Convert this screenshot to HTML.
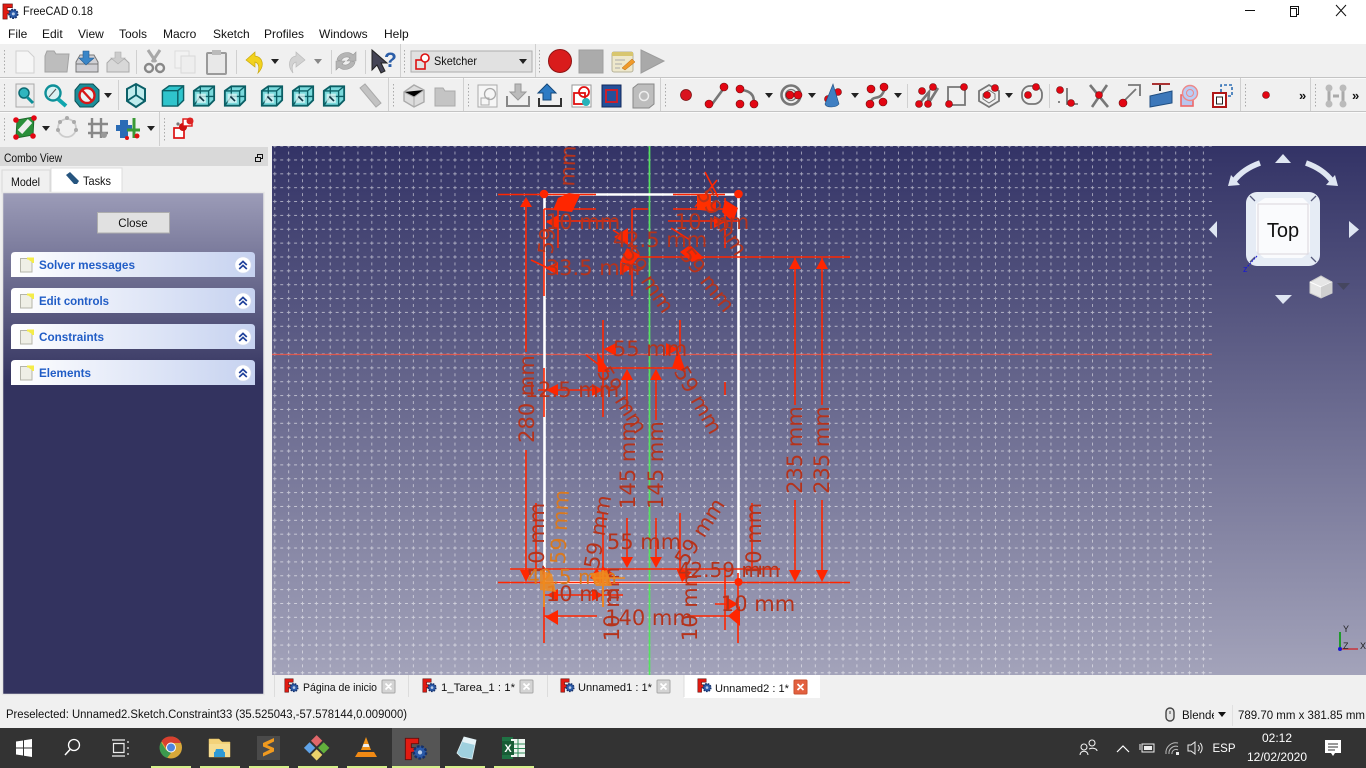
<!DOCTYPE html>
<html>
<head>
<meta charset="utf-8">
<title>FreeCAD 0.18</title>
<style>
html,body{margin:0;padding:0;width:1366px;height:768px;overflow:hidden;background:#f0f0f0}
svg{display:block;position:absolute;left:0;top:0}
text{font-family:"Liberation Sans",sans-serif;font-size:12px;fill:#111}
.m{font-size:12px}
.d{font-family:"DejaVu Sans",sans-serif;font-size:21px;fill:#b5331c;text-anchor:middle;dominant-baseline:central}
.o{fill:#d9791f}
.t{fill:#fff;font-size:12px;text-anchor:middle}
.b{font-weight:bold;fill:#215dc6;font-size:11.5px}
</style>
</head>
<body>
<svg width="1366" height="768" viewBox="0 0 1366 768" xmlns="http://www.w3.org/2000/svg">
<defs>
<linearGradient id="vg" x1="0" y1="0" x2="0" y2="1"><stop offset="0" stop-color="#333366"/><stop offset="1" stop-color="#a3a3ba"/></linearGradient>
<linearGradient id="pg" x1="0" y1="0" x2="0" y2="1"><stop offset="0" stop-color="#9c9cb8"/><stop offset=".38" stop-color="#33335f"/><stop offset="1" stop-color="#33335f"/></linearGradient>
<linearGradient id="bg" x1="0" y1="0" x2="1" y2="0"><stop offset="0" stop-color="#fff"/><stop offset="1" stop-color="#c6d2f0"/></linearGradient>
<pattern id="grid" width="13.86" height="13.86" patternUnits="userSpaceOnUse" patternTransform="translate(642.07 347.07)">
<path d="M5.2 6.93H8.7M12.4 6.93H13.86M0 6.93H1.5M6.93 5.2V8.7M6.93 12.4V13.86M6.93 0V1.5" stroke="#fff" stroke-opacity=".55" stroke-width=".9" fill="none"/>
</pattern>
<symbol id="fc" viewBox="0 0 18 18" overflow="visible"><path d="M1 1H11V5H5.5V8H10V11.5H5.5V17H1Z" fill="#e21b12" stroke="#5b1010" stroke-width=".7"/><circle cx="12" cy="11.5" r="4.6" fill="#2b5aa8" stroke="#16316a" stroke-width="1.8" stroke-dasharray="2 1.2"/><circle cx="12" cy="11.5" r="1.6" fill="#b7cbe8"/></symbol>
<symbol id="cube" viewBox="0 0 26 26" overflow="visible"><path d="M2 8 9 3H24V18L18 24H2Z" fill="#2fc4cc" stroke="#0b5f65" stroke-width="1.5"/><path d="M2 8H18V24M18 8 24 3" fill="none" stroke="#0b5f65" stroke-width="1.5"/></symbol>
<symbol id="cubew" viewBox="0 0 26 26" overflow="visible"><path d="M2 8 9 3H24V18L18 24H2Z" fill="#7ad9dc" stroke="#0b5f65" stroke-width="2"/><path d="M2 8H18V24M18 8 24 3M9 3V14M9 14H24M9 14 2 24" fill="none" stroke="#0b5f65" stroke-width="1.5"/><rect x="5" y="11" width="10" height="10" fill="#e8f8f8" opacity=".7"/><path d="M8 14 13 19" stroke="#134" stroke-width="1.800"/></symbol>
<symbol id="note" viewBox="0 0 14 16"><rect x=".5" y="1.5" width="11.5" height="13.5" fill="#efefe6" stroke="#b5b5aa"/><path d="M7 1.5H13V6" fill="#f4ec4a" stroke="#f4ec4a" stroke-width="2"/></symbol>
<symbol id="chev" viewBox="0 0 18 18"><circle cx="9" cy="9" r="8.3" fill="#fff" stroke="#cdd6ee"/><path d="M5.2 9 9 5.4 12.8 9M5.2 13 9 9.4 12.8 13" fill="none" stroke="#1d3f9a" stroke-width="1.7"/></symbol>
<symbol id="drop" viewBox="0 0 8 5"><path d="M0 0H8L4 5Z" fill="#222"/></symbol>
</defs>

<!-- title + menu -->
<rect width="1366" height="44" fill="#fff"/>
<use href="#fc" x="2" y="3" width="17" height="17"/>
<text x="23" y="15" textLength="70" lengthAdjust="spacingAndGlyphs">FreeCAD 0.18</text>
<path d="M1245 10.5H1255" stroke="#111"/>
<path d="M1290.5 8.5V6.5H1298.5V14.5H1296.5M1290.5 8.5H1296.5V16.500H1290.5V8.5Z" fill="none" stroke="#111"/>
<path d="M1336 5 1346 16M1346 5 1336 16" stroke="#111" stroke-width="1"/>
<text class="m" x="8" y="38">File</text><text class="m" x="42" y="38">Edit</text><text class="m" x="78" y="38">View</text><text class="m" x="119" y="38">Tools</text><text class="m" x="163" y="38">Macro</text><text class="m" x="213" y="38">Sketch</text><text class="m" x="264" y="38">Profiles</text><text class="m" x="319" y="38">Windows</text><text class="m" x="384" y="38">Help</text>

<!-- toolbars -->
<rect y="44" width="1366" height="102" fill="#f0f0f0"/>
<path d="M0 77.5H1366M0 111.5H1366" stroke="#c4c4c4"/>
<path d="M0 78.5H1366M0 112.5H1366" stroke="#fafafa"/>
<g stroke="#d0d0d0">
<path d="M136.5 50V74M236.5 50V74M331.5 50V74M365.5 50V74M400.5 44V77M535.5 44V77M118.5 80V110M388.5 78V111M463.5 78V111M660.5 78V111M907.5 84V108M1049.5 84V108M1240.5 78V111M1310.5 78V111M159.5 112V146"/>
</g>
<g stroke="#aaa" stroke-dasharray="1.5 2" fill="none">
<path d="M4.5 50V74M404.5 50V74M539.5 50V74M4.5 84V108M393.5 84V108M468.5 84V108M665.5 84V108M1245.5 84V108M1315.5 84V108M4.5 118V142M164.5 118V142"/>
</g>

<!-- row 1 -->
<path d="M16 51H28L34 57V73H16Z" fill="#f6f6f6" stroke="#d0d0d0"/>
<path d="M45 56V72H67L69 54H56L54 51H47Z" fill="#bdbdbd" stroke="#a2a2a2"/>
<path d="M76 72V62L80 55H94L98 62V72Z" fill="#d0d0d4" stroke="#777"/><path d="M76 64H98" stroke="#777"/><path d="M83 51H89V58H94L86 65 79 58H83Z" fill="#3a86c8" stroke="#235a8f" stroke-width=".6"/>
<path d="M107 72V63L111 59H125L129 63V72Z" fill="#d8d8d8" stroke="#aaa"/><path d="M115 52H121V58H125L118 64 111 58H115Z" fill="#ccc" stroke="#aaa" stroke-width=".6"/>
<path d="M148 50 156 62M160 50 152 62" stroke="#a8a8a8" stroke-width="3"/><circle cx="149" cy="68" r="4" fill="none" stroke="#888" stroke-width="2.4"/><circle cx="160" cy="68" r="4" fill="none" stroke="#888" stroke-width="2.4"/>
<rect x="175" y="51" width="14" height="17" fill="#f2f2f2" stroke="#ddd"/><rect x="181" y="56" width="14" height="17" fill="#eee" stroke="#d8d8d8"/>
<rect x="207" y="53" width="19" height="21" rx="1" fill="#e8e8e8" stroke="#9a9a9a" stroke-width="2"/><rect x="212" y="50" width="9" height="5" fill="#bbb"/>
<path d="M246 60 255 52V56C263 57 265 66 258 73 260 66 258 63 255 62V67Z" fill="#f2d21e" stroke="#c9a90f" stroke-width=".7"/>
<use href="#drop" x="271" y="59" width="8" height="5"/>
<path d="M305 60 296 52V56C289 57 287 66 293 73 291 66 293 63 296 62V67Z" fill="#d2d2d2" stroke="#bbb" stroke-width=".7"/>
<path d="M314 59H322L318 64Z" fill="#888"/>
<path d="M337 60C338 53 349 50 353 55L356 52V61H347L350 58C347 56 343 57 341 61ZM355 62C354 69 343 72 339 67L336 70V61H345L342 64C345 66 349 65 351 61Z" fill="#b5b5b5" stroke="#999" stroke-width=".6"/>
<path d="M372 50V70L377 65 381 73 385 71 381 63H387Z" fill="#445" stroke="#222"/>
<text x="384" y="67" style="font-size:21px;font-weight:bold;fill:#2b5ea8">?</text>
<rect x="411" y="51" width="121" height="21" fill="#e1e1e1" stroke="#adadad"/>
<rect x="416" y="60" width="9" height="9" fill="none" stroke="#d11" stroke-width="1.6"/><circle cx="425" cy="58" r="4" fill="#fff" stroke="#d11" stroke-width="1.6"/>
<text x="434" y="65" textLength="43" lengthAdjust="spacingAndGlyphs">Sketcher</text>
<use href="#drop" x="519" y="59" width="8" height="5"/>
<circle cx="560" cy="61" r="11.5" fill="#d91c1c" stroke="#8f1414"/>
<rect x="579" y="50" width="24" height="23" fill="#ababab" stroke="#9f9f9f"/>
<rect x="612" y="52" width="21" height="20" rx="2" fill="#eee8cc" stroke="#b6b29a"/><rect x="612" y="52" width="21" height="4" fill="#d8c66f"/><path d="M615 60H625M615 64H622M615 68H620" stroke="#aaa"/><path d="M622 68 632 59 635 62 625 70Z" fill="#f09a2a" stroke="#b26a12" stroke-width=".5"/>
<path d="M641 50 664 61 641 73Z" fill="#a9a9a9" stroke="#9d9d9d"/>

<!-- row 2 -->
<rect x="16" y="84" width="18" height="23" fill="#ececec" stroke="#aaa"/><circle cx="24" cy="93" r="5" fill="#2fb5bf" stroke="#0c6a72" stroke-width="1.5"/><path d="M27 97 33 103" stroke="#0c8f98" stroke-width="3"/>
<circle cx="53" cy="93" r="7.5" fill="#d9f2f3" stroke="#0d8f98" stroke-width="2.4"/><path d="M58 99 66 106" stroke="#10a6ae" stroke-width="4"/><path d="M49 97 56 89" stroke="#555"/>
<path d="M80 84H93L99 90V101L93 107H80L75 101V90Z" fill="#1c8e99" stroke="#0a4f55"/><circle cx="87" cy="95.500" r="7.500" fill="#e8f3f3" stroke="#d61717" stroke-width="2.4"/><path d="M82 90 92 101" stroke="#d61717" stroke-width="2.4"/>
<use href="#drop" x="104" y="93" width="8" height="5"/>
<path d="M127 89 136 84 145 89V101L136 107 127 101Z" fill="#bfeced" stroke="#0b6068" stroke-width="2"/><path d="M136 95 136 84M136 95 127 101M136 95 145 101" stroke="#0b6068" stroke-width="1.8"/>
<use href="#cube" x="160" y="83" width="26" height="25"/>
<use href="#cubew" x="192" y="83" width="24" height="25"/>
<use href="#cubew" x="223" y="83" width="24" height="25"/>
<use href="#cubew" x="260" y="83" width="24" height="25"/>
<use href="#cubew" x="291" y="83" width="24" height="25"/>
<use href="#cubew" x="322" y="83" width="24" height="25"/>
<path d="M360 88 365 84 381 103 376 107Z" fill="#c2c2c2" stroke="#aaa"/>
<path d="M404 92 414 85 424 90 424 102 414 107 404 101Z" fill="#dcdcdc" stroke="#aaa" stroke-width="1.400"/><path d="M404 92 414 97 424 90M414 97V107" stroke="#aaa"/>
<path d="M435 88H443L445 91H455V106H435Z" fill="#c4c4c4" stroke="#aaa"/>
<rect x="478" y="85" width="19" height="22" fill="#f6f6f6" stroke="#aaa"/><circle cx="490" cy="94" r="5.500" fill="none" stroke="#aaa" stroke-width="1.300"/><path d="M481 98H489V105H481Z" fill="none" stroke="#aaa"/>
<path d="M515 84H521V92H526L518 100 510 92H515Z" fill="#bbb" stroke="#999"/><path d="M507 96V106H529V96" fill="none" stroke="#888" stroke-width="2"/>
<path d="M547 84 556 93H551V100H543V93H538Z" fill="#2d7bc4" stroke="#14477a"/><path d="M539 98V106H561V98" fill="none" stroke="#333" stroke-width="2"/>
<rect x="572" y="85" width="19" height="22" fill="#fff" stroke="#999"/><rect x="574" y="93" width="11" height="11" fill="none" stroke="#e01010" stroke-width="1.800"/><circle cx="584" cy="92" r="5" fill="none" stroke="#e01010" stroke-width="1.800"/><circle cx="586" cy="102" r="4" fill="#26b2ba"/>
<rect x="602" y="85" width="19" height="22" fill="#24509a" stroke="#12295a"/><rect x="606" y="90" width="11" height="12" fill="none" stroke="#c81f2e" stroke-width="2"/>
<path d="M633 88 638 84H654V104L649 108H633Z" fill="#bdbdbd" stroke="#888"/><circle cx="644" cy="96" r="4.500" fill="none" stroke="#eee" stroke-width="1.500"/>

<g stroke="#777" fill="none" stroke-width="2.600">
<path d="M710 107 724 88"/><path d="M741 90C755 91 754 100 754 105"/>
<circle cx="791" cy="95" r="9.500"/><circle cx="791" cy="95" r="5.500" stroke-width="1.300"/>
<path d="M870 104C873 92 880 104 885 88"/>
<path d="M919 104 929 92 928 104 938 88"/>
<path d="M948 87H965V105H948Z" stroke-width="1.800"/>
<path d="M989 85 999 91V101L989 107 979 101V91Z" stroke-width="1.800"/><path d="M989 90 995 94V99L989 103 983 99V94Z" stroke-width="1"/>
<rect x="1022" y="86" width="20" height="18" rx="8" stroke-width="1.800"/>
<path d="M1067 88V104H1078M1058 102H1060" stroke-width="1.800"/>
<path d="M1090 85 1108 107M1107 85 1092 107"/>
<path d="M1121 104 1136 89M1128 85H1140V96" stroke-width="1.800"/>
</g>
<circle cx="686" cy="95" r="5.500" fill="#d9141e" stroke="#701010" stroke-width=".7"/>
<g fill="#e30613" stroke="#6a1010" stroke-width=".6">
<circle cx="709" cy="104" r="4"/><circle cx="724" cy="87" r="4"/>
<circle cx="740" cy="89" r="4"/><circle cx="740" cy="104" r="4"/><circle cx="754" cy="104" r="4"/>
<circle cx="790" cy="95" r="4"/><circle cx="798" cy="95" r="4"/>
<circle cx="828" cy="99" r="3.500"/><circle cx="838" cy="92" r="3.500"/>
<circle cx="871" cy="89" r="4"/><circle cx="884" cy="87" r="4"/><circle cx="870" cy="104" r="4"/><circle cx="883" cy="102" r="4"/>
<circle cx="919" cy="104" r="3.500"/><circle cx="928" cy="104" r="3.500"/><circle cx="922" cy="91" r="3.500"/><circle cx="933" cy="87" r="3.500"/>
<circle cx="949" cy="104" r="3.500"/><circle cx="964" cy="87" r="3.500"/>
<circle cx="995" cy="88" r="3.500"/><circle cx="987" cy="95" r="3.500"/>
<circle cx="1036" cy="87" r="3.500"/><circle cx="1028" cy="95" r="3.500"/>
<circle cx="1060" cy="90" r="3.500"/><circle cx="1071" cy="103" r="3.500"/>
<circle cx="1099" cy="95" r="3.500"/><circle cx="1123" cy="103" r="4"/>
<circle cx="1266" cy="95" r="3.500"/>
</g>
<path d="M833 84 839 104 C836 108 826 108 825 104Z" fill="#3f7fc2" stroke="#24507e" stroke-width=".6"/>
<use href="#drop" x="765" y="93" width="8" height="5"/><use href="#drop" x="808" y="93" width="8" height="5"/><use href="#drop" x="851" y="93" width="8" height="5"/><use href="#drop" x="894" y="93" width="8" height="5"/><use href="#drop" x="1005" y="93" width="8" height="5"/>
<path d="M1150 96 1172 91V103L1150 107Z" fill="#3d78ba" stroke="#1f4d80"/><path d="M1160 85V91" stroke="#333" stroke-width="2"/><path d="M1152 84H1170" stroke="#a33" stroke-width="2"/>
<rect x="1181" y="95" width="12" height="11" fill="#b9c5ee" stroke="#e66" stroke-width="1.600"/><circle cx="1190" cy="93" r="7.500" fill="#b9cdf5" stroke="#e88" stroke-width="1.400"/><circle cx="1190" cy="93" r="3.500" fill="none" stroke="#e88"/>
<rect x="1213" y="93" width="13" height="14" fill="#fff" stroke="#b01818" stroke-width="2"/><rect x="1216.500" y="97" width="6" height="7" fill="#fff" stroke="#222"/><path d="M1221 92V85H1232V96H1228" fill="none" stroke="#2e6fb5" stroke-width="1.600" stroke-dasharray="3 2"/>
<text x="1299" y="100" style="font-size:13px;font-weight:bold;fill:#111">»</text>
<text x="1352" y="100" style="font-size:13px;font-weight:bold;fill:#111">»</text>
<path d="M1329 88V104M1343 88V104M1333 96H1339" stroke="#aaa" stroke-width="3"/><circle cx="1329" cy="88" r="3.500" fill="#bbb"/><circle cx="1343" cy="88" r="3.500" fill="#bbb"/><circle cx="1329" cy="104" r="3.500" fill="#bbb"/><circle cx="1343" cy="104" r="3.500" fill="#bbb"/>

<!-- row 3 -->
<path d="M17 120 34 117 33 135 16 138Z" fill="#2a8f3a" stroke="#1b6a2a"/><path d="M20 132 30 121" stroke="#eee" stroke-width="6"/>
<g fill="#e30613"><circle cx="16" cy="120" r="2.800"/><circle cx="34" cy="118" r="2.800"/><circle cx="16" cy="137" r="2.800"/><circle cx="33" cy="136" r="2.800"/></g>
<use href="#drop" x="42" y="126" width="8" height="5"/>
<circle cx="67" cy="128" r="9" fill="none" stroke="#ccc" stroke-width="1.800"/><g fill="#aaa"><circle cx="60" cy="122" r="2"/><circle cx="74" cy="122" r="2"/><circle cx="58" cy="130" r="2"/><circle cx="76" cy="130" r="2"/><circle cx="67" cy="118" r="2"/></g>
<path d="M92 118V138M101 118V138M88 124H108M88 133H108" stroke="#888" stroke-width="2.400"/><circle cx="104" cy="135" r="3" fill="#999"/>
<path d="M120 120H128V138H120ZM116 125H132V131H116Z" fill="#2a6bb5"/><path d="M127 130H140M134 118V138" stroke="#3a9a35" stroke-width="3"/><circle cx="137" cy="136" r="2.500" fill="#d11"/><circle cx="127" cy="138" r="2" fill="#d11"/>
<use href="#drop" x="147" y="126" width="8" height="5"/>
<rect x="174" y="128" width="10" height="10" fill="#fff" stroke="#d11" stroke-width="1.700"/><circle cx="183" cy="127" r="4" fill="#c11"/><rect x="183" y="119" width="9" height="7" fill="#fff" stroke="#d11" stroke-width="1.400"/><circle cx="190" cy="121" r="3.500" fill="#d22"/><circle cx="178" cy="124" r="1.600" fill="#777"/>

<!-- combo view -->
<rect y="146" width="272" height="552" fill="#f0f0f0"/>
<rect x="0" y="147" width="268" height="19" fill="#d9d9d9"/>
<text x="4" y="162" textLength="58" lengthAdjust="spacingAndGlyphs" style="font-size:11.500px">Combo View</text>
<path d="M255.500 157.500H260.500V161.500H255.500ZM257.500 157.500V154.500H262.500V158.500H260.500" fill="none" stroke="#111" stroke-width="1"/>
<rect x="2" y="170" width="48" height="23" fill="#f0f0f0" stroke="#d9d9d9"/>
<text x="11" y="186" textLength="29" lengthAdjust="spacingAndGlyphs">Model</text>
<rect x="51" y="168" width="71" height="25" fill="#fff" stroke="#dcdcdc"/>
<path d="M66 175 70 172 79 181 77 184 74 184Z" fill="#26557f"/>
<text x="83" y="185" textLength="28" lengthAdjust="spacingAndGlyphs">Tasks</text>
<rect x="2.500" y="192.500" width="261.500" height="502" fill="url(#pg)" stroke="#e6e6e6" stroke-width="1.500"/>
<rect x="97.500" y="212.500" width="72" height="20.500" fill="#e1e1e1" stroke="#adadad"/>
<text x="133" y="227" style="text-anchor:middle;font-size:11.500px">Close</text>
<g>
<path d="M11 277V256Q11 252 15 252H251Q255 252 255 256V277Z" fill="url(#bg)"/>
<path d="M11 313V292Q11 288 15 288H251Q255 288 255 292V313Z" fill="url(#bg)"/>
<path d="M11 349V328Q11 324 15 324H251Q255 324 255 328V349Z" fill="url(#bg)"/>
<path d="M11 385V364Q11 360 15 360H251Q255 360 255 364V385Z" fill="url(#bg)"/>
<use href="#note" x="20" y="257" width="14" height="16"/><use href="#note" x="20" y="293" width="14" height="16"/><use href="#note" x="20" y="329" width="14" height="16"/><use href="#note" x="20" y="365" width="14" height="16"/>
<text class="b" x="39" y="269" textLength="96" lengthAdjust="spacingAndGlyphs">Solver messages</text><text class="b" x="39" y="305" textLength="70" lengthAdjust="spacingAndGlyphs">Edit controls</text><text class="b" x="39" y="341" textLength="65" lengthAdjust="spacingAndGlyphs">Constraints</text><text class="b" x="39" y="377" textLength="52" lengthAdjust="spacingAndGlyphs">Elements</text>
<use href="#chev" x="234" y="256" width="18" height="18"/><use href="#chev" x="234" y="292" width="18" height="18"/><use href="#chev" x="234" y="328" width="18" height="18"/><use href="#chev" x="234" y="364" width="18" height="18"/>
</g>

<!-- 3D view -->
<rect x="272" y="146" width="1094" height="529" fill="url(#vg)"/>
<rect x="272" y="146" width="940" height="529" fill="url(#grid)"/>
<path d="M272 354.500H1212" stroke="#e8574a" stroke-width="1.300" opacity=".9"/>
<path d="M649.500 146V675" stroke="#55e060" stroke-width="1.700"/>
<g stroke="#fff" stroke-width="2.600" fill="none"><path d="M544.500 194.500H738.500V582.500H544.500Z"/></g>
<path d="M558 582.500H600" stroke="#fff" stroke-width="3"/>
<!-- red construction lines -->
<g stroke="#ff2600" stroke-width="1.600" fill="none">
<path d="M498 194.500H596M673 194.500H725M498 582.500H850M510 569H780M637 257H850M603 368H677"/>
<path d="M526 200V352M526 450V572M795 258V405M822 258V405M795 500V580M822 500V580"/>
<path d="M544 209V296M544 368V417M544 567V643M738 573V643M558 200V248M725 198V248M725 567V630M725 382V395"/>
<path d="M603 320V417M680 320V352M603 513V607M680 513V573M536 503V570M752 503V570M627 370V410M656 370V420M627 518V560M656 518V560M632 209V296"/>
<path d="M544 209H596M632 209H648M673 209H725M547 221H618M668 221H740M545 595H623M544 616H597M687 616H737M715 604H737"/>
<path d="M705 172 718 197M717 180 695 207M531 260 548 268M613 230 628 240M671 228 690 240M586 355 603 368M538 390 600 390M680 355 677 368"/>
</g>
<!-- arrowheads -->
<g fill="#ff2600">
<path d="M526 197 520 207H532ZM526 582 520 570H532ZM795 258 789 269H801ZM822 258 816 269H828ZM795 582 789 570H801ZM822 582 816 570H828ZM627 369 621 380H633ZM656 369 650 380H662ZM627 568 621 557H633ZM656 568 650 557H662Z"/>
<path d="M546 222 558 215V229ZM728 616 740 606V626 Z M545 617 558 610V625ZM738 604 726 597V611ZM545 268 558 262V275ZM632 268 620 262V275ZM604 349 616 343V356ZM678 349 666 343V356ZM603 390 592 384V396ZM546 390 558 384V396ZM547 595 558 589V601ZM603 595 592 589V601ZM725 222 714 216V228Z"/>
<path d="M569 193 580 195 572 212 553 210 558 198ZM614 237 628 228 628 245ZM627 248 640 255 632 265 620 262ZM690 245 704 258 692 262 680 252ZM725 200 738 208 733 222 722 212ZM700 210 716 200 716 212ZM597 352 610 372 598 372ZM678 350 686 372 672 368ZM602 566 614 574 600 582ZM676 568 692 572 682 582ZM597 568 605 585 590 578Z"/>
<rect x="697" y="195" width="14" height="15" fill="#ff3000"/>
<circle cx="544" cy="194" r="4.300"/><circle cx="738.500" cy="194" r="4.300"/><circle cx="738.500" cy="582" r="4"/>
</g>
<!-- dimension labels -->
<text class="d" transform="translate(527 399) rotate(-90)">280 mm</text>
<text class="d" transform="translate(795 450) rotate(-90)">235 mm</text>
<text class="d" transform="translate(822 450) rotate(-90)">235 mm</text>
<text class="d" transform="translate(628 465) rotate(-90)">145 mm</text>
<text class="d" transform="translate(656 465) rotate(-90)">145 mm</text>
<text class="d" x="649" y="618">140 mm</text>
<text class="d" x="758" y="604">10 mm</text>
<text class="d" x="583" y="594">10 mm</text>
<text class="d" transform="translate(612 604) rotate(-90)">10 mm</text>
<text class="d" transform="translate(690 604) rotate(-90)">10 mm</text>
<text class="d" transform="translate(537 540) rotate(-90)">10 mm</text>
<text class="d" transform="translate(754 540) rotate(-90)">10 mm</text>
<text class="d" x="650" y="349">55 mm</text>
<text class="d" x="644" y="542">55 mm</text>
<text class="d" x="572" y="390">12.5 mm</text>
<text class="d" x="593" y="268">33.5 mm</text>
<text class="d" x="660" y="240">42.5 mm</text>
<text class="d" x="583" y="222">10 mm</text>
<text class="d" x="712" y="222">10 mm</text>
<text class="d" x="729" y="570" style="font-size:20px">42.59 mm</text>
<text class="d" transform="translate(568 166) rotate(-88)">mm</text>
<text class="d" transform="translate(547 241) rotate(-85)">59</text>
<text class="d" transform="translate(722 222) rotate(58)">59 mm</text>
<text class="d" transform="translate(648 280) rotate(56)">59 mm</text>
<text class="d" transform="translate(707 280) rotate(52)">59 mm</text>
<text class="d" transform="translate(698 400) rotate(60)">59 mm</text>
<text class="d" transform="translate(622 400) rotate(58)">59 mm</text>
<text class="d" transform="translate(598 532) rotate(-80)">59 mm</text>
<text class="d" transform="translate(700 532) rotate(-58)">59 mm</text>
<text class="d o" transform="translate(560 527) rotate(-87)">59 mm</text>
<text class="d o" x="572" y="577" style="font-size:20px">42.5 mm</text>
<path d="M544 580V607M603 570V607" stroke="#ef8a1f" stroke-width="1.800"/>
<path d="M540 570 552 574 556 592 540 590ZM590 574 607 570 612 586 596 586Z" fill="#ef8a1f" opacity=".85"/>
<path d="M593 578H625" stroke="#ef8a1f" stroke-width="1.600"/>

<!-- nav cube -->
<g fill="#dfe6f2">
<path d="M1283 154 1291 163H1275Z"/><path d="M1217 221V238L1209 229.500Z"/><path d="M1349 221V238L1359 229.500Z"/><path d="M1275 295H1292L1283 304Z"/>
<path d="M1228 186 1240 185 1231 175Z"/><path d="M1338 186 1326 185 1335 175Z"/>
</g>
<path d="M1260 163Q1243 169 1234 181M1306 163Q1323 169 1332 181" fill="none" stroke="#dfe6f2" stroke-width="5.500"/>
<rect x="1246" y="192" width="74" height="74" rx="11" fill="#e6ecf5"/>
<path d="M1256 204 1265 198H1303L1310 205V252L1302 258H1264L1256 251Z" fill="#fafbfd"/>
<rect x="1258" y="204" width="50" height="50" fill="none" stroke="#d9d4dc" stroke-width="1"/>
<path d="M1250 196 1255 201M1316 196 1311 201M1250 262 1255 257M1316 262 1311 257" stroke="#55597a" stroke-width="1.300"/>
<text x="1283" y="237" style="font-size:20px;text-anchor:middle;fill:#111">Top</text>
<path d="M1257 256 1247 267" stroke="#1717d8" stroke-dasharray="2 1"/>
<text x="1243" y="272" style="font-size:9px;fill:#1717d8">z</text>
<path d="M1310 282 1321 276 1332 282V293L1321 298 1310 293Z" fill="#e6e6e6" stroke="#ccc"/><path d="M1310 282 1321 287 1332 282" fill="none" stroke="#fff"/><path d="M1321 287V298L1332 293V282Z" fill="#cfcfcf"/>
<path d="M1337 283H1350L1343.500 290Z" fill="#45465f"/>
<!-- axis -->
<path d="M1340 649V632" stroke="#1f9a2c" stroke-width="2"/><path d="M1340 649H1358" stroke="#c8343a" stroke-width="1.500"/><circle cx="1340" cy="649" r="2" fill="#1a1ad0"/>
<text x="1343" y="632" style="font-size:9px;fill:#222">Y</text><text x="1343" y="649" style="font-size:9px;fill:#222">Z</text><text x="1360" y="649" style="font-size:9px;fill:#222">X</text>

<!-- document tabs -->
<rect x="272" y="675" width="1094" height="53" fill="#f0f0f0"/>
<rect x="684" y="675" width="136" height="23" fill="#fff"/>
<path d="M274.500 675V697M408.500 675V697M547.500 675V697M684 675V697" stroke="#dcdcdc"/>
<use href="#fc" x="284" y="678" width="15" height="15"/><use href="#fc" x="422" y="678" width="15" height="15"/><use href="#fc" x="560" y="678" width="15" height="15"/><use href="#fc" x="697" y="678" width="15" height="15"/>
<text x="303" y="691" textLength="74" lengthAdjust="spacingAndGlyphs" style="font-size:11px">Página de inicio</text>
<text x="441" y="691" textLength="74" lengthAdjust="spacingAndGlyphs" style="font-size:11px">1_Tarea_1 : 1*</text>
<text x="578" y="691" textLength="74" lengthAdjust="spacingAndGlyphs" style="font-size:11px">Unnamed1 : 1*</text>
<text x="715" y="692" textLength="74" lengthAdjust="spacingAndGlyphs" style="font-size:11px">Unnamed2 : 1*</text>
<g fill="#d4d4d4" stroke="#a8a8a8"><rect x="382" y="680" width="13" height="13" rx="1"/><rect x="520" y="680" width="13" height="13" rx="1"/><rect x="657" y="680" width="13" height="13" rx="1"/></g>
<rect x="794" y="680" width="13" height="14" rx="1" fill="#e3603f" stroke="#c8502f"/>
<path d="M385.500 683.500 391.500 689.500M391.500 683.500 385.500 689.500M523.500 683.500 529.500 689.500M529.500 683.500 523.500 689.500M660.500 683.500 666.500 689.500M666.500 683.500 660.500 689.500M797.500 684 803.500 690M803.500 684 797.500 690" stroke="#fff" stroke-width="1.700"/>

<!-- status -->
<text x="6" y="718" textLength="401" lengthAdjust="spacingAndGlyphs" style="font-size:11.500px">Preselected: Unnamed2.Sketch.Constraint33 (35.525043,-57.578144,0.009000)</text>
<rect x="1166" y="708" width="8" height="13" rx="4" fill="#e5e5e5" stroke="#444" stroke-width="1.400"/><path d="M1170 711V714" stroke="#444"/>
<text x="1182" y="719" style="font-size:11.500px">Blende</text>
<rect x="1214" y="705" width="6" height="18" fill="#f0f0f0"/>
<path d="M1218 712H1226L1222 717Z" fill="#111"/>
<path d="M1232.500 705V726" stroke="#e0e0e0"/>
<text x="1238" y="719" textLength="127" lengthAdjust="spacingAndGlyphs" style="font-size:11.500px">789.70 mm x 381.85 mm</text>

<!-- taskbar -->
<rect y="728" width="1366" height="40" fill="#333"/>
<rect x="392" y="728" width="48" height="40" fill="#555"/>
<g fill="#d6f08c"><rect x="151" y="766" width="40" height="2"/><rect x="200" y="766" width="40" height="2"/><rect x="249" y="766" width="40" height="2"/><rect x="298" y="766" width="40" height="2"/><rect x="347" y="766" width="40" height="2"/><rect x="392" y="766" width="48" height="2"/><rect x="445" y="766" width="40" height="2"/><rect x="494" y="766" width="40" height="2"/></g>
<path d="M16 741.500 23 740.500V747.500H16ZM24 740.300 32 739V747.500H24ZM16 748.500H23V755.500L16 754.500ZM24 748.500H32V757L24 755.700Z" fill="#fff"/>
<circle cx="74" cy="745" r="5.500" fill="none" stroke="#fff" stroke-width="1.300"/><path d="M70 749.500 65 755" stroke="#fff" stroke-width="1.500"/>
<path d="M112 740H125M112 756H125M113.500 743.500H124V752.500H113.500ZM128 741V743M128 747V749M128 753V755" fill="none" stroke="#eee" stroke-width="1.200"/>
<circle cx="171" cy="747.500" r="11" fill="#d8a83a"/><path d="M171 736.500A11 11 0 0 1 181 743H171A5 5 0 0 0 166 748L161.500 741A11 11 0 0 1 171 736.500Z" fill="#d8402f"/><path d="M161 742 166 750 171 753 167 758A11 11 0 0 1 161 742Z" fill="#3c9a4e"/><circle cx="171" cy="747.500" r="4.500" fill="#4f86e0" stroke="#fff"/>
<path d="M209 739H219L222 742H230V757H209Z" fill="#f3d27a" stroke="#e8c25e" stroke-width=".5"/><rect x="209" y="744" width="21" height="13" fill="#f6dd92"/><path d="M214 752H225V757H214Z" fill="#2e9ad6"/><path d="M216 749H223L224 752H215Z" fill="#2e9ad6"/>
<rect x="257" y="736" width="23" height="24" fill="#4a4a4a"/><path d="M263 746 274 741V744.500L267 748 274 751V754.500L263 759.500V756L270 752.500 263 749.500Z" fill="#f09a1f" transform="translate(0 -3)"/>
<g transform="rotate(45 317 747.500)"><rect x="308" y="739" width="8" height="8" fill="#e0676a"/><rect x="318" y="739" width="8" height="8" fill="#63b03c"/><rect x="308" y="749" width="8" height="8" fill="#5fa3e8"/><rect x="318" y="749" width="8" height="8" fill="#ecd36b"/></g>
<path d="M366 737 371 750H361Z" fill="#f39419"/><path d="M358 752H374L377 757H355Z" fill="#f28a14"/><path d="M363.500 744H368.500L369.500 747H362.500Z" fill="#eee"/>
<use href="#fc" x="404" y="737" width="24" height="24"/>
<path d="M457 753 464 737 476 740 472 759 461 757Z" fill="#9fd0de" stroke="#dfeef2" stroke-width=".8"/><path d="M464 737 476 740 475 745 462.500 742Z" fill="#e6f3f7"/>
<rect x="502" y="737" width="11" height="22" fill="#1f7244"/><rect x="511" y="739" width="14" height="18" fill="#eef5f0"/><path d="M511 744H525M511 748.500H525M511 753H525M518 739V757" stroke="#2d8a57"/><rect x="502" y="741" width="12" height="14" fill="#185c35"/>
<text x="508" y="752" style="font-size:11px;font-weight:bold;fill:#fff;text-anchor:middle">X</text>

<circle cx="1092" cy="743" r="3" fill="none" stroke="#eee" stroke-width="1.100"/><circle cx="1084" cy="747" r="3" fill="none" stroke="#eee" stroke-width="1.100"/><path d="M1080 755C1080 750 1088 750 1088 755M1089 749C1093 747 1097 749 1097 751" fill="none" stroke="#eee" stroke-width="1.100"/>
<path d="M1117 752 1123 746 1129 752" fill="none" stroke="#fff" stroke-width="1.200"/>
<rect x="1142" y="744" width="12" height="8" fill="none" stroke="#eee"/><rect x="1144" y="746" width="8" height="4" fill="#eee"/><path d="M1140 744V750" stroke="#eee"/>
<path d="M1166 754A10 10 0 0 1 1178 743M1169 754A7 7 0 0 1 1178 746.500M1172 754A4 4 0 0 1 1178 750" fill="none" stroke="#bbb"/><path d="M1176 752H1179V755H1176Z" fill="#eee"/>
<path d="M1188 745H1191L1195 742V754L1191 751H1188ZM1198 745A4 4 0 0 1 1198 751M1200 743A7 7 0 0 1 1200 753" fill="none" stroke="#eee"/>
<text class="t" x="1224" y="752" style="font-size:11.500px">ESP</text>
<text class="t" x="1277" y="742">02:12</text>
<text class="t" x="1277" y="761">12/02/2020</text>
<path d="M1325 740H1341V753H1335L1333 756 1331 753H1325Z" fill="#fff"/><path d="M1328 744H1338M1328 747H1338M1328 750H1335" stroke="#333"/>
</svg>
</body>
</html>
